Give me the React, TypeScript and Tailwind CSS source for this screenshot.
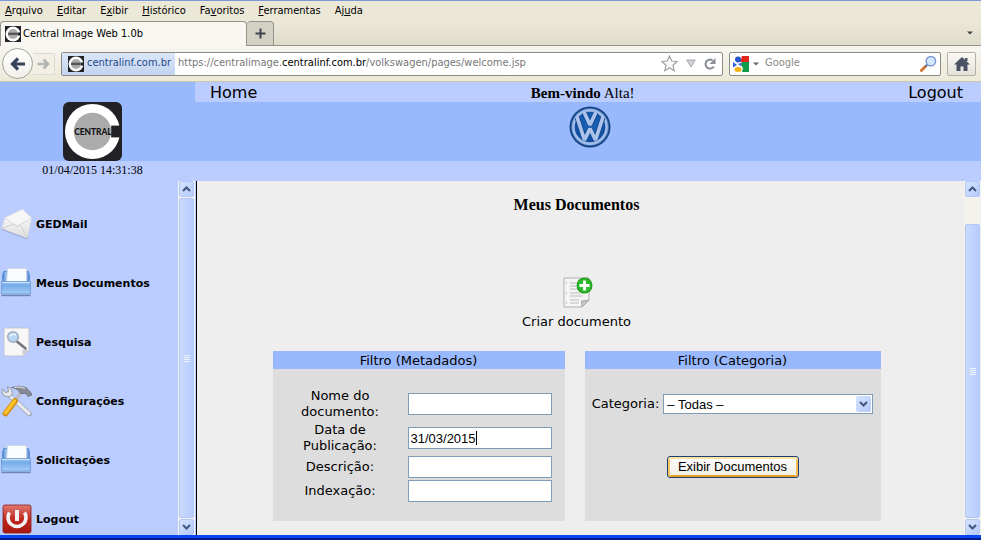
import React from 'react';

const UI = "font-['DejaVu_Sans_Condensed','DejaVu_Sans',sans-serif]";
const VERDANA = "font-['DejaVu_Sans',sans-serif]";
const TIMES = "font-['Liberation_Serif',serif]";
const ARIAL = "font-['Liberation_Sans',sans-serif]";

/* ---------- icons ---------- */

function CentralLogo({ className, label }: { className: string; label?: boolean }) {
  return (
    <svg viewBox="0 0 60 60" className={className} aria-hidden="true">
      <rect width="60" height="60" rx={label ? 6 : 0} fill="#222226" />
      <circle cx="30" cy="30" r="28" fill="#fff" />
      <circle cx="30" cy="30" r="19" fill="#ababab" />
      <rect x="49" y="24" width="11" height="12" fill="#222226" />
      {label ? (
        <text x="30.500" y="33.500" textAnchor="middle" fontFamily="Lato, sans-serif" fontWeight="900" fontSize="8.500" fill="#111">
          CENTRAL
        </text>
      ) : (
        <rect x="12" y="25" width="36" height="9" fill="#55555a" />
      )}
    </svg>
  );
}

function VwLogo() {
  return (
    <svg viewBox="0 0 42 42" className="size-[42px]" aria-label="Volkswagen" role="img">
      <defs>
        <radialGradient id="vw" cx="50%" cy="40%" r="60%">
          <stop offset="0" stopColor="#1d66bb" />
          <stop offset="1" stopColor="#0e4a9c" />
        </radialGradient>
      </defs>
      <circle cx="21" cy="21" r="20.500" fill="#16407c" />
      <circle cx="21" cy="21" r="19" fill="#3d74bd" />
      <circle cx="21" cy="21" r="16.600" fill="url(#vw)" stroke="#a3bde8" strokeWidth="2.600" />
      <g fill="none" stroke="#0c3c80" strokeWidth="5" strokeLinejoin="bevel">
        <path d="M15 6.500 L21 19 L27 6.500" />
        <path d="M8 11.500 L15.500 33.500 L21 22.500 L26.500 33.500 L34 11.500" />
      </g>
      <g fill="none" stroke="#abc2ea" strokeWidth="3.800" strokeLinejoin="bevel">
        <path d="M15 6 L21 19 L27 6" />
        <path d="M8 11 L15.500 34 L21 22.500 L26.500 34 L34 11" />
      </g>
    </svg>
  );
}

function MailIcon() {
  return (
    <svg viewBox="0 0 32 32" className="size-8" aria-hidden="true">
      <defs>
        <linearGradient id="env" x1="0" y1="0" x2="0" y2="1">
          <stop offset="0" stopColor="#fff" />
          <stop offset="1" stopColor="#dedede" />
        </linearGradient>
      </defs>
      <path d="M2 21.500 L27 31 L28.500 28" fill="none" stroke="#98a6d0" strokeWidth="1" />
      <path d="M4.500 10 L22.500 1.500 L31.500 10 L27.500 30 L2 20.500 Z" fill="url(#env)" stroke="#d3d3d6" strokeWidth="0.600" />
      <path d="M4.500 10 L22.500 1.500 L31.500 10 L18 18 Z" fill="#f7f7f7" stroke="#e4e4e4" strokeWidth="0.600" />
      <path d="M2 20.500 L14 16 L17 18.500 L20 16.500 L27.500 30" fill="none" stroke="#cdcdcd" strokeWidth="0.900" />
      <path d="M4.500 10 L15 17 M31.500 10 L20 16.500" fill="none" stroke="#d8d8d8" strokeWidth="0.900" />
    </svg>
  );
}

function TrayIcon({ id }: { id: string }) {
  return (
    <svg viewBox="0 0 32 32" className="size-8" aria-hidden="true">
      <defs>
        <linearGradient id={id} x1="0" y1="0" x2="0" y2="1">
          <stop offset="0" stopColor="#a6cdf7" />
          <stop offset="0.300" stopColor="#74abe8" />
          <stop offset="1" stopColor="#a4cdf8" />
        </linearGradient>
      </defs>
      <path d="M3.500 4 H28.500 L30 8 V16 H2 V8 Z" fill="#5d93d6" />
      <path d="M4.500 5 H27.500 V15 H4.500 Z" fill="#8fb9ec" />
      <path d="M7.500 1.500 H26.500 V16 H6.500 Z" fill="#fbfcfe" stroke="#c8d0de" strokeWidth="0.700" />
      <path d="M1.500 14.500 H30.500 V27 H1.500 Z" fill={`url(#${id})`} stroke="#5b90d2" strokeWidth="0.700" />
      <path d="M2 15.500 H30" stroke="#cde3fb" strokeWidth="1" />
      <path d="M1.500 28.500 H30.500" stroke="#7084b2" strokeWidth="1.400" />
    </svg>
  );
}

function SearchPageIcon() {
  return (
    <svg viewBox="0 0 32 32" className="size-8" aria-hidden="true">
      <path d="M4 2 H29 V24 L23 30 H4 Z" fill="#f7f7f7" stroke="#b9bdca" strokeWidth="0.800" />
      <path d="M29 24 L23 30 L22 24 Z" fill="#cfcfd4" />
      <path d="M17 15.500 L25.500 22.500" stroke="#73767e" strokeWidth="2.600" strokeLinecap="round" />
      <circle cx="13" cy="11" r="5.300" fill="#b5d6f5" stroke="#a3adbf" strokeWidth="1.600" />
      <path d="M9.500 10.500 Q12 7 16 9" stroke="#e9f5ff" strokeWidth="1.600" fill="none" />
    </svg>
  );
}

function ToolsIcon() {
  return (
    <svg viewBox="0 0 32 32" className="size-8" aria-hidden="true">
      <path d="M8 9 L29.500 29" stroke="#9da3b0" strokeWidth="4.600" strokeLinecap="round" />
      <path d="M8 9 L29 28.500" stroke="#e6e9ee" strokeWidth="3.200" strokeLinecap="round" />
      <path d="M2.500 4 Q1 10 6 11.500 Q12 13 12.500 7.500 Q12 3 7.500 1.500 L8.500 6.500 L5.500 7.500 Z" fill="#e4e6ea" stroke="#8d929c" strokeWidth="0.900" />
      <path d="M22 6 L15.500 15" stroke="#b9bcc3" strokeWidth="3.600" />
      <path d="M15 16 L5.500 28.500" stroke="#d48a08" strokeWidth="5.600" strokeLinecap="round" />
      <path d="M14.500 16 L5.500 28" stroke="#fcc32c" strokeWidth="3.400" strokeLinecap="round" />
      <path d="M11.500 2.500 Q19 -0.500 26 2.500 L30.500 7 L32 10 L28 11.500 L26 8.500 L20.500 8.500 L18.500 5.500 Q15 3 11.500 2.500 Z" fill="#858a94" stroke="#5a5e68" strokeWidth="0.600" />
      <path d="M14 2.500 Q20 1 25 3.500" stroke="#d7dae0" strokeWidth="1.200" fill="none" />
    </svg>
  );
}

function PowerIcon() {
  return (
    <svg viewBox="0 0 32 32" className="size-8" aria-hidden="true">
      <defs>
        <linearGradient id="pow" x1="0" y1="0" x2="0" y2="1">
          <stop offset="0" stopColor="#de7a72" />
          <stop offset="0.500" stopColor="#c22a20" />
          <stop offset="1" stopColor="#a8160f" />
        </linearGradient>
      </defs>
      <rect x="3" y="2" width="28" height="28" rx="2" fill="url(#pow)" stroke="#8e1c18" strokeWidth="0.800" />
      <path d="M9.500 9.500 A9 9 0 1 0 24.500 9.500" fill="none" stroke="#f3f3f3" strokeWidth="3.600" />
      <path d="M17 7 V18" stroke="#f3f3f3" strokeWidth="4" />
    </svg>
  );
}

function NewDocumentIcon() {
  return (
    <svg viewBox="0 0 32 32" className="size-8" aria-hidden="true">
      <path d="M3 2 H28 V24 L21 31 H3 Z" fill="#f4f4f4" stroke="#a9a9a9" strokeWidth="0.900" />
      <path d="M28 24 L21 31 L20.500 25 Z" fill="#c9c9c9" stroke="#8f8f8f" strokeWidth="0.700" />
      <path d="M9 7 H16 M9 10 H15 M9 13 H17 M9 17 H23 M9 20 H22 M9 24 H18 M9 27 H18" stroke="#cecece" strokeWidth="1.600" />
      <path d="M5.500 6 V8 M5.500 16 V18 M5.500 26 V28" stroke="#c2c2c2" strokeWidth="1" />
      <circle cx="23.500" cy="9.500" r="8" fill="#1f9f1f" />
      <circle cx="23.500" cy="9.500" r="6.800" fill="#2fb92c" />
      <path d="M23.500 4.500 V14.500 M18.500 9.500 H28.500" stroke="#fff" strokeWidth="2.800" />
    </svg>
  );
}

function Chevron({ up }: { up?: boolean }) {
  return (
    <svg viewBox="0 0 9 6" className="h-1.5 w-[9px]" aria-hidden="true">
      <path d={up ? 'M1 5 L4.500 1.500 L8 5' : 'M1 1 L4.500 4.500 L8 1'} fill="none" stroke="#41577d" strokeWidth="2" />
    </svg>
  );
}

/* ---------- window scroll bar ---------- */

function ScrollBar({ gap, label }: { gap: boolean; label: string }) {
  const arrow =
    'flex h-4 w-[15px] shrink-0 items-center justify-center rounded-xs border border-[#b4c8f6] bg-linear-to-br from-[#d6e3ff] to-[#b3cafc]';
  return (
    <div className="flex w-[17px] shrink-0 flex-col items-center bg-[#f3f2ec]" aria-label={label} role="group">
      <button type="button" aria-label="Rolar para cima" className={arrow}>
        <Chevron up />
      </button>
      {gap && <div className="h-[26px]" />}
      <div className="my-px flex w-[15px] grow flex-col items-center justify-center gap-px rounded-xs border border-[#b4c8f8] bg-linear-to-r from-[#cbdafe] to-[#b6ccfd]">
        <span className="h-px w-1.5 bg-[#eef4fe]" />
        <span className="h-px w-1.5 bg-[#eef4fe]" />
        <span className="h-px w-1.5 bg-[#eef4fe]" />
        <span className="h-px w-1.5 bg-[#eef4fe]" />
      </div>
      <button type="button" aria-label="Rolar para baixo" className={arrow}>
        <Chevron />
      </button>
    </div>
  );
}

/* ---------- browser chrome ---------- */

const menus: [string, string, string][] = [
  ['', 'A', 'rquivo'],
  ['', 'E', 'ditar'],
  ['E', 'x', 'ibir'],
  ['', 'H', 'istórico'],
  ['Fa', 'v', 'oritos'],
  ['', 'F', 'erramentas'],
  ['Aj', 'u', 'da'],
];

function BrowserChrome() {
  return (
    <div className={`${UI} border-t border-[#7b98da] bg-[#ebe8d7] text-[11px] text-black`}>
      <nav aria-label="Menu do navegador" className="flex h-5 items-center gap-3.5 px-[5px]">
        {menus.map(([before, key, after]) => (
          <button key={before + key + after} type="button" className="leading-4">
            {before}
            <span className="underline">{key}</span>
            {after}
          </button>
        ))}
      </nav>

      <div className="flex h-[25px] items-end border-b border-[#96948a] bg-linear-to-b from-[#ebe8d7] to-[#dfdccb]">
        <div className="-mb-px flex h-[25px] w-[247px] items-center gap-0.5 rounded-t-sm border border-b-0 border-[#96948a] bg-[#f8f7f1] pl-1">
          <CentralLogo className="size-4" />
          <span>Central Image Web 1.0b</span>
        </div>
        <button
          type="button"
          aria-label="Nova aba"
          className="flex h-6 w-[27px] items-center justify-center rounded-t-sm border border-b-0 border-l-0 border-[#96948a] bg-[#d3d1c3]"
        >
          <svg viewBox="0 0 11 11" className="size-[11px]" aria-hidden="true">
            <path d="M5.500 0.500 V10.500 M0.500 5.500 H10.500" stroke="#3f4550" strokeWidth="2" />
          </svg>
        </button>
        <button type="button" aria-label="Listar abas" className="mr-2 mb-2.5 ml-auto">
          <svg viewBox="0 0 6 4" className="h-1 w-1.5" aria-hidden="true">
            <path d="M0 0.500 H6 L3 3.500 Z" fill="#444" />
          </svg>
        </button>
      </div>

      <div className="flex h-9 items-center border-b border-[#c9c5a8] bg-linear-to-b from-[#f7f6f0] to-[#ece9d8] pr-[5px] pl-0.5">
        <button
          type="button"
          aria-label="Voltar"
          className="flex size-[31px] shrink-0 items-center justify-center rounded-full border border-[#a3a39e] bg-linear-to-b from-white to-[#f1f0ea]"
        >
          <svg viewBox="0 0 16 14" className="h-3.5 w-4" aria-hidden="true">
            <path d="M8 1.500 L2.500 7 L8 12.500 M3 7 H15" fill="none" stroke="#35435c" strokeWidth="3.200" />
          </svg>
        </button>
        <button
          type="button"
          aria-label="Avançar"
          className="flex h-[22px] w-[22px] shrink-0 items-center justify-center border border-l-0 border-[#dddbd1] bg-[#f1efe6]"
        >
          <svg viewBox="0 0 13 12" className="h-3 w-[13px]" aria-hidden="true">
            <path d="M6.500 1.500 L11 6 L6.500 10.500 M0.500 6 H10.500" fill="none" stroke="#b3b4b4" strokeWidth="2.600" />
          </svg>
        </button>

        <div className="ml-1.5 flex h-6 grow items-center rounded-xs border border-[#8c8b84] bg-white">
          <button
            type="button"
            className="flex h-full shrink-0 items-center gap-[3px] bg-linear-to-b from-[#dbe6f8] to-[#c3d3f0] pr-1 pl-1.5 text-[#1f4a8a]"
          >
            <CentralLogo className="size-4" />
            centralinf.com.br
          </button>
          <div
            role="textbox"
            aria-label="Endereço"
            contentEditable
            suppressContentEditableWarning
            className="grow pl-[3px] whitespace-nowrap text-[#777] outline-none"
          >
            https://centralimage.<span className="text-black">centralinf.com.br</span>/volkswagen/pages/welcome.jsp
          </div>
          <div className="flex shrink-0 items-center gap-2 pr-1.5">
            <button type="button" aria-label="Adicionar aos favoritos">
              <svg viewBox="0 0 17 17" className="size-[17px]" aria-hidden="true">
                <path
                  d="M8.500 1 L10.700 6 L16 6.500 L12 10.200 L13.200 15.700 L8.500 12.800 L3.800 15.700 L5 10.200 L1 6.500 L6.300 6 Z"
                  fill="#fafafa"
                  stroke="#a2a2a6"
                  strokeWidth="1.200"
                />
              </svg>
            </button>
            <button type="button" aria-label="Histórico de endereços">
              <svg viewBox="0 0 10 9" className="h-[9px] w-2.5" aria-hidden="true">
                <path d="M0.800 1 H9.200 L5 8 Z" fill="#d4d4d8" stroke="#a5a5ab" />
              </svg>
            </button>
            <button type="button" aria-label="Recarregar">
              <svg viewBox="0 0 12 12" className="size-3" aria-hidden="true">
                <path d="M8.500 2.300 A4.500 4.500 0 1 0 9.800 8.500" fill="none" stroke="#8a8e96" strokeWidth="2" />
                <path d="M11.500 0 V6 H5.500 Z" fill="#8a8e96" />
              </svg>
            </button>
          </div>
        </div>

        <div className="ml-1.5 flex h-6 w-[212px] shrink-0 items-center rounded-xs border border-[#8c8b84] bg-white px-[3px]">
          <button type="button" aria-label="Mecanismo de busca" className="flex items-center gap-1">
            <svg viewBox="0 0 16 16" className="size-4" aria-hidden="true">
              <rect width="16" height="16" fill="#fff" />
              <path d="M9 0 H16 V6 H7 Z" fill="#e1261c" />
              <path d="M9 6 H16 V16 H9 L10 12 L8 9 Z" fill="#109b48" />
              <path d="M0 6 L4 9 L0 11.500 Z" fill="#2b63d9" />
              <circle cx="5" cy="3.500" r="3" fill="#2356c7" />
              <path d="M5 8 L9 6.500 L8 10 Z" fill="#2b63d9" />
              <ellipse cx="5" cy="13.400" rx="3.600" ry="2.500" fill="#f5b01d" />
            </svg>
            <svg viewBox="0 0 6 4" className="h-1 w-1.5" aria-hidden="true">
              <path d="M0 0.500 H6 L3 3.500 Z" fill="#666" />
            </svg>
          </button>
          <input
            type="text"
            aria-label="Pesquisar com Google"
            placeholder="Google"
            className="ml-1.5 min-w-0 grow bg-transparent outline-none placeholder:text-[#8b8b85]"
          />
          <button type="button" aria-label="Pesquisar">
            <svg viewBox="0 0 18 18" className="size-[17px]" aria-hidden="true">
              <path d="M1.500 16.500 L6 12" stroke="#d6782c" strokeWidth="3" strokeLinecap="round" />
              <path d="M5.500 12.500 L8 10" stroke="#5e6fa0" strokeWidth="2" />
              <circle cx="11.500" cy="6.500" r="5" fill="#d2e8fc" stroke="#7f97d2" strokeWidth="1.600" />
            </svg>
          </button>
        </div>

        <button
          type="button"
          aria-label="Página inicial"
          className="ml-1.5 flex h-6 w-[29px] shrink-0 items-center justify-center rounded-xs border border-[#b3b1a6] bg-linear-to-b from-[#fbfaf7] to-[#e3e1d8]"
        >
          <svg viewBox="0 0 16 14" className="h-3.5 w-4" aria-hidden="true">
            <path d="M8 0 L16 7.500 H13.500 V14 H9.500 V9.500 H6.500 V14 H2.500 V7.500 H0 Z M11 1 H13.500 V4 H11 Z" fill="#4a5264" />
          </svg>
        </button>
      </div>
    </div>
  );
}

/* ---------- application ---------- */

const links = [
  { text: 'GEDMail', icon: <MailIcon /> },
  { text: 'Meus Documentos', icon: <TrayIcon id="tray-a" /> },
  { text: 'Pesquisa', icon: <SearchPageIcon /> },
  { text: 'Configurações', icon: <ToolsIcon /> },
  { text: 'Solicitações', icon: <TrayIcon id="tray-b" /> },
  { text: 'Logout', icon: <PowerIcon /> },
];

const fields = [
  { id: 'nome', label: 'Nome do documento:', value: '' },
  { id: 'data', label: 'Data de Publicação:', value: '31/03/2015' },
  { id: 'descricao', label: 'Descrição:', value: '' },
  { id: 'indexacao', label: 'Indexação:', value: '' },
];

function AppHeader() {
  return (
    <header className="flex bg-[#bbccff]">
      <div className="flex w-[195px] shrink-0 flex-col">
        <div className="flex h-[79px] items-end justify-center bg-[#99b9ff] pr-2.5">
          <CentralLogo className="size-[59px]" label />
        </div>
        <time className={`${TIMES} h-5 pr-2.5 text-center text-xs leading-[18px]`}>01/04/2015 14:31:38</time>
      </div>
      <div className="flex grow flex-col">
        <div className="flex h-5 items-end justify-between pr-[18px] pl-[15px]">
          <a href="#home" className={`${VERDANA} text-base leading-[18px]`}>
            Home
          </a>
          <p className={`${TIMES} text-[15px] leading-[18px]`}>
            <b>Bem-vindo</b> Alta!
          </p>
          <a href="#logout" className={`${VERDANA} text-base leading-[18px]`}>
            Logout
          </a>
        </div>
        <div className="flex h-[59px] justify-center bg-[#99b9ff] pt-1 pl-1">
          <VwLogo />
        </div>
      </div>
    </header>
  );
}

export default function App() {
  return (
    <div className="flex h-screen flex-col overflow-hidden bg-[#bbccff] text-black">
      <BrowserChrome />
      <AppHeader />

      <div className="flex min-h-0 grow">
        <nav aria-label="Menu principal" className="w-[178px] shrink-0">
          <ul className={`${VERDANA} flex flex-col gap-[29px] pt-7 text-[11px] font-bold`}>
            {links.map((l) => (
              <li key={l.text} className="h-[30px]">
                <a href="#menu" className="flex h-full items-center gap-1">
                  <span className="shrink-0">{l.icon}</span>
                  <span className="pt-0.5">{l.text}</span>
                </a>
              </li>
            ))}
          </ul>
        </nav>
        <ScrollBar gap={false} label="Rolagem do menu" />

        <main className={`${VERDANA} ml-px flex grow flex-col items-center border-l border-black bg-[#eee] pt-3.5 pr-2 text-[13px]`}>
          <h1 className={`${TIMES} text-base leading-5 font-bold`}>Meus Documentos</h1>
          <a href="#criar" className="mt-[61px] flex flex-col items-center gap-1.5">
            <NewDocumentIcon />
            <span className="leading-4">Criar documento</span>
          </a>

          <form className="mt-[21px] flex gap-5">
            <section aria-labelledby="metadados" className="w-[292px] bg-[#ddd]">
              <h2 id="metadados" className="bg-[#99b9ff] pt-0.5 text-center leading-4">
                Filtro (Metadados)
              </h2>
              <div className="flex flex-col gap-0.5 pt-[19px] pb-[19px]">
                {fields.map((f) => (
                  <div key={f.id} className="flex items-center">
                    <label htmlFor={f.id} className="w-[135px] shrink-0 px-6 text-center leading-4">
                      {f.label}
                    </label>
                    <span className="relative">
                      <input
                        id={f.id}
                        type="text"
                        defaultValue={f.value}
                        className={`${ARIAL} block h-[22px] w-36 border border-[#7f9db9] bg-white px-0.5 text-[13px] outline-none`}
                      />
                      {f.value && <span className="absolute top-1 left-[68px] h-3.5 w-px bg-black" />}
                    </span>
                  </div>
                ))}
              </div>
            </section>

            <section aria-labelledby="categorias" className="w-[296px] bg-[#ddd]">
              <h2 id="categorias" className="bg-[#99b9ff] pt-0.5 text-center leading-4">
                Filtro (Categoria)
              </h2>
              <div className="flex flex-col items-center gap-[42px] pt-[25px]">
                <div className="flex items-center gap-1">
                  <label htmlFor="categoria" className="leading-4">
                    Categoria:
                  </label>
                  <span className="relative">
                    <select
                      id="categoria"
                      className={`${ARIAL} block h-5 w-[210px] appearance-none border border-[#7f9db9] bg-white px-[3px] text-[13px] outline-none`}
                    >
                      <option>– Todas –</option>
                    </select>
                    <span className="pointer-events-none absolute inset-y-0.5 right-0.5 flex w-[15px] items-center justify-center rounded-xs bg-linear-to-br from-[#d6e3ff] to-[#b3cafc]">
                      <Chevron />
                    </span>
                  </span>
                </div>
                <button
                  type="button"
                  className={`${ARIAL} h-[22px] w-[132px] rounded-[3px] border border-[#1c3f73] bg-linear-to-b from-white to-[#eeede4] text-[13px] leading-4 shadow-[inset_0_2px_0_#fde3a0,inset_2px_0_0_#f8c765,inset_-2px_0_0_#f5bc4f,inset_0_-2px_0_#e99d1f]`}
                >
                  Exibir Documentos
                </button>
              </div>
            </section>
          </form>
        </main>
        <ScrollBar gap label="Rolagem da página" />
      </div>

      <div className="h-[5px] shrink-0 border-t-3 border-[#0a45f0] bg-[#001a96]" />
    </div>
  );
}
